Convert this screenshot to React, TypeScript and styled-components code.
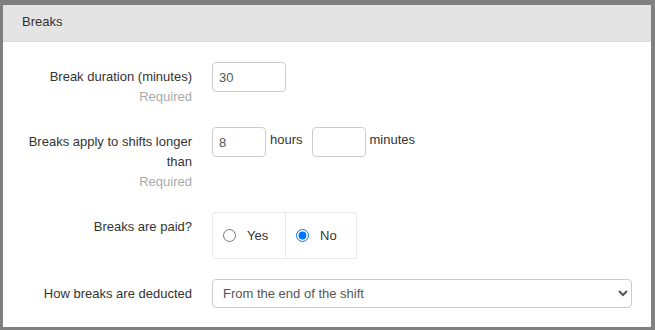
import React from "react";
import styled, { createGlobalStyle } from "styled-components";

const Global = createGlobalStyle`
  html, body { margin: 0; padding: 0; background: #808080; }
  body { font-family: "Liberation Sans", Arial, sans-serif; font-size: 13px; color: #333; }
  * { box-sizing: border-box; }
`;

const Frame = styled.div`
  width: 655px;
  height: 330px;
  padding: 5px 4px 3px 3px;
  background: #808080;
`;

const Panel = styled.section`
  height: 100%;
  background: #fff;
  display: flex;
  flex-direction: column;
`;

const Header = styled.header`
  height: 37px;
  padding: 7px 19px 0;
  line-height: 20px;
  background: #e4e4e4;
  border-bottom: 1px solid #dadada;
`;

const Body = styled.div`
  padding: 20px 19px 0 15px;
  display: flex;
  flex-direction: column;
  gap: 20px;
`;

const Row = styled.div`
  display: grid;
  grid-template-columns: 174px 1fr;
  column-gap: 20px;
  align-items: start;
`;

const Label = styled.div`
  padding-top: 5px;
  text-align: right;
  line-height: 20px;
`;

const Hint = styled.div`
  color: #aaa;
`;

const Inline = styled.div`
  display: flex;
  align-items: flex-start;
`;

const TextInput = styled.input<{ $w: number }>`
  width: ${(p) => p.$w}px;
  height: 30px;
  padding: 0 6px;
  border: 1px solid #ccc;
  border-radius: 4px;
  font: inherit;
  color: #555;
  outline: none;
`;

const Unit = styled.span`
  line-height: 26px;
  padding: 0 9px 0 4px;
  color: #333;
`;

const RadioGroup = styled.div`
  display: inline-flex;
  height: 47px;
  border: 1px solid #e8e8e8;
  border-radius: 3px;
  justify-self: start;
`;

const RadioCell = styled.label<{ $w: number; $divider?: boolean }>`
  width: ${(p) => p.$w}px;
  display: flex;
  align-items: center;
  padding-left: 10px;
  gap: 11px;
  border-left: ${(p) => (p.$divider ? "1px solid #e8e8e8" : "none")};
  input { margin: 0; width: 13px; height: 13px; }
`;

const Select = styled.select`
  width: 420px;
  height: 29px;
  padding: 0 6px;
  border: 1px solid #ccc;
  border-radius: 4px;
  font: inherit;
  color: #555;
  background: #fff;
  outline: none;
`;

export default function App() {
  return (
    <>
      <Global />
      <Frame>
        <Panel>
          <Header>Breaks</Header>
          <Body>
            <Row>
              <Label>
                Break duration (minutes)
                <Hint>Required</Hint>
              </Label>
              <Inline>
                <TextInput $w={74} defaultValue="30" />
              </Inline>
            </Row>
            <Row>
              <Label>
                Breaks apply to shifts longer than
                <Hint>Required</Hint>
              </Label>
              <Inline>
                <TextInput $w={54} defaultValue="8" />
                <Unit>hours</Unit>
                <TextInput $w={54} defaultValue="" />
                <Unit>minutes</Unit>
              </Inline>
            </Row>
            <Row>
              <Label>Breaks are paid?</Label>
              <Inline>
                <RadioGroup>
                  <RadioCell $w={72}>
                    <input type="radio" name="paid" />
                    Yes
                  </RadioCell>
                  <RadioCell $w={71} $divider>
                    <input type="radio" name="paid" defaultChecked />
                    No
                  </RadioCell>
                </RadioGroup>
              </Inline>
            </Row>
            <Row>
              <Label>How breaks are deducted</Label>
              <Inline>
                <Select defaultValue="end">
                  <option value="end">From the end of the shift</option>
                  <option value="start">From the start of the shift</option>
                </Select>
              </Inline>
            </Row>
          </Body>
        </Panel>
      </Frame>
    </>
  );
}
